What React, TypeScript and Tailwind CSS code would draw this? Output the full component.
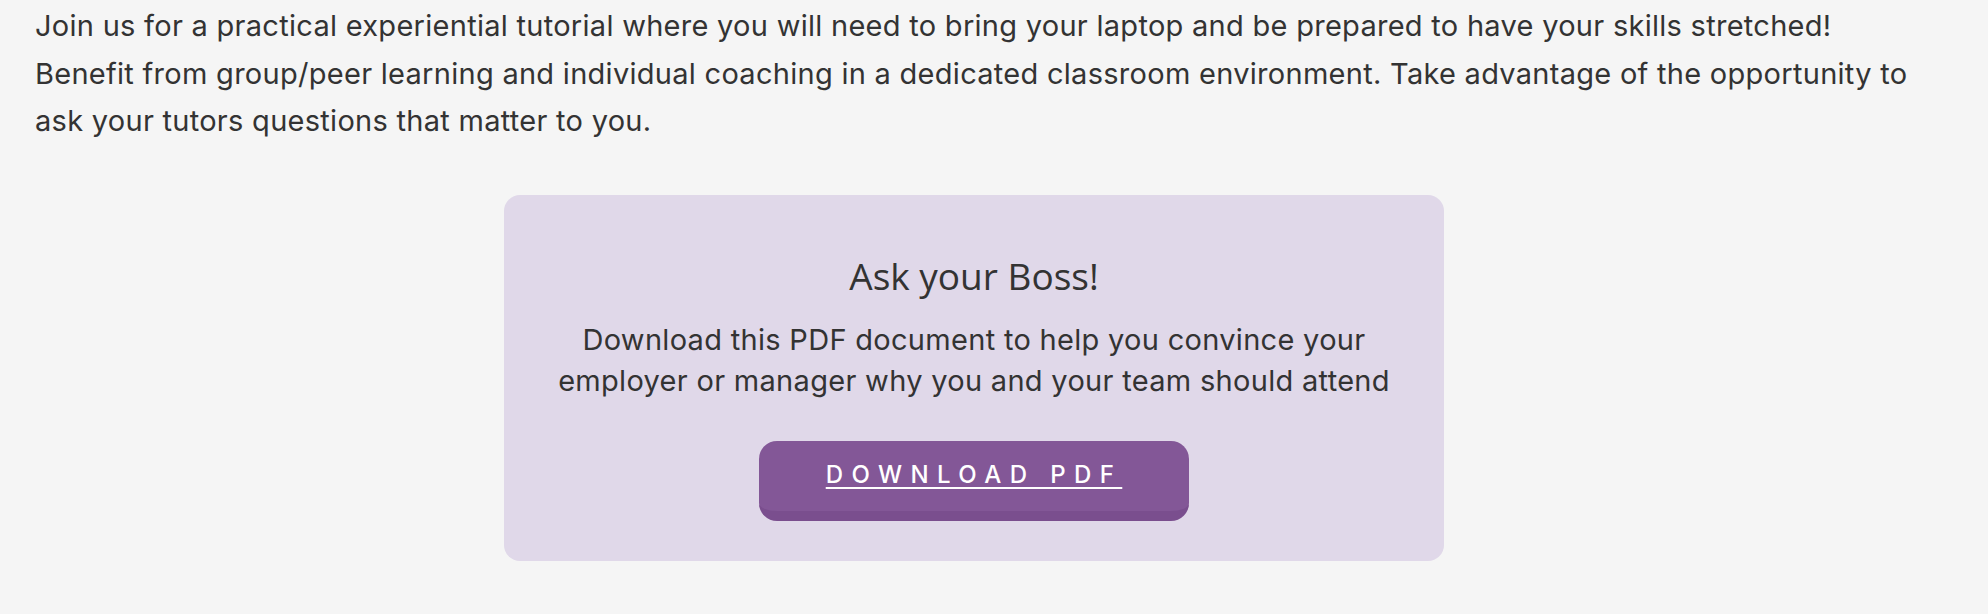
import React from "react";

const introLines = [
  "Join us for a practical experiential tutorial where you will need to bring your laptop and be prepared to have your skills stretched!",
  "Benefit from group/peer learning and individual coaching in a dedicated classroom environment. Take advantage of the opportunity to",
  "ask your tutors questions that matter to you.",
];

const App: React.FC = () => {
  return (
    <div className="min-h-screen w-full bg-[#f5f5f5] font-['Inter','Lato',sans-serif] text-[#333333]">
      <div className="ml-[35px] w-[1878px] pt-[2px]">
        <p className="text-[29px] leading-[47.5px] tracking-[0.28px]">
          {introLines.map((line) => (
            <span key={line} className="block whitespace-nowrap">
              {line}
            </span>
          ))}
        </p>

        {/* Ask your boss box */}
        <div className="mx-auto mt-[50px] flex w-[940px] flex-col items-center rounded-[16px] bg-[#e0d8e9] pb-[40px] pt-[57px] text-center">
          <h3 className="font-['Open_Sans',sans-serif] text-[37px] leading-[48px] text-[#333333]">Ask your Boss!</h3>
          <p className="mt-[19px] text-[29px] leading-[41px] tracking-[0.3px]">
            <span className="block whitespace-nowrap">Download this PDF document to help you convince your</span>
            <span className="block whitespace-nowrap">employer or manager why you and your team should attend</span>
          </p>
          <a
            href="#"
            className="mt-[40px] flex h-[80px] w-[430px] items-center justify-center rounded-[18px] border-b-[10px] border-[#7a4e8e] bg-[#835797] pb-[2px] text-[24px] font-medium tracking-[8.4px] text-white underline decoration-2 underline-offset-[4px]"
          >
            DOWNLOAD PDF
          </a>
        </div>
      </div>
    </div>
  );
};

export default App;
